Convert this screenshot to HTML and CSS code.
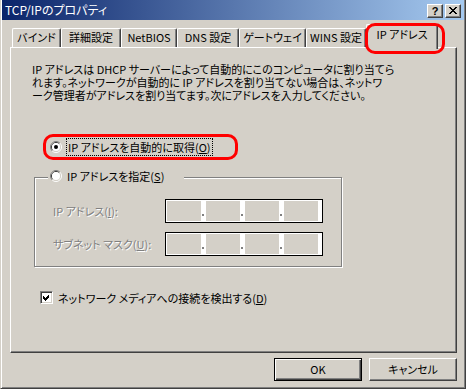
FILE: index.html
```html
<!DOCTYPE html>
<html lang="ja">

<head>
    <meta charset="UTF-8">
    <title>TCP/IPのプロパティ</title>
    <link rel="stylesheet" href="styles.css">
</head>

<body>
    <div class="window">
        <!-- タイトルバー -->
        <div class="title_bar">
            <span class="title">TCP/IPのプロパティ</span>
            <div class="cap_btns">
                <div class="cap_btn help">?</div>
                <div class="cap_btn">
                    <svg width="8" height="7" viewBox="0 0 8 7" shape-rendering="crispEdges">
                        <path d="M0 0h2v1h1v1h2v-1h1v-1h2v1h-1v1h-1v1h-1v1h1v1h1v1h1v1h-2v-1h-1v-1h-2v1h-1v1h-2v-1h1v-1h1v-1h1v-1h-1v-1h-1v-1h-1z" fill="#000"/>
                    </svg>
                </div>
            </div>
        </div>

        <!-- タブ -->
        <div class="tabs">
            <div class="tab">バインド</div>
            <div class="tab">詳細設定</div>
            <div class="tab">NetBIOS</div>
            <div class="tab">DNS 設定</div>
            <div class="tab">ゲートウェイ</div>
            <div class="tab">WINS 設定</div>
            <div class="tab active">IP アドレス</div>
        </div>

        <div class="panel">
            <p class="desc">IP アドレスは DHCP サーバーによって自動的にこのコンピュータに割り当てら<br>れます。ネットワークが自動的に IP アドレスを割り当てない場合は、ネットワ<br>ーク管理者がアドレスを割り当てます。次にアドレスを入力してください。</p>

            <div class="radio_row">
                <svg class="radio" width="12" height="12" viewBox="0 0 12 12">
                    <path d="M2.11 9.89A5.5 5.5 0 0 1 9.89 2.11" stroke="#808080" fill="none"/>
                    <path d="M9.89 2.11A5.5 5.5 0 0 1 2.11 9.89" stroke="#fff" fill="none"/>
                    <path d="M2.82 9.18A4.5 4.5 0 0 1 9.18 2.82" stroke="#404040" fill="none"/>
                    <path d="M9.18 2.82A4.5 4.5 0 0 1 2.82 9.18" stroke="#d4d0c8" fill="none"/>
                    <circle cx="6" cy="6" r="4" fill="#fff"/>
                    <circle cx="6" cy="6" r="2" fill="#000"/>
                </svg>
                <span class="focus">IP アドレスを自動的に取得(<u>O</u>)</span>
            </div>

            <div class="group">
                <div class="legend">
                    <svg class="radio" width="12" height="12" viewBox="0 0 12 12">
                        <path d="M2.11 9.89A5.5 5.5 0 0 1 9.89 2.11" stroke="#808080" fill="none"/>
                        <path d="M9.89 2.11A5.5 5.5 0 0 1 2.11 9.89" stroke="#fff" fill="none"/>
                        <path d="M2.82 9.18A4.5 4.5 0 0 1 9.18 2.82" stroke="#404040" fill="none"/>
                        <path d="M9.18 2.82A4.5 4.5 0 0 1 2.82 9.18" stroke="#d4d0c8" fill="none"/>
                        <circle cx="6" cy="6" r="4" fill="#fff"/>
                    </svg>
                    <span>IP アドレスを指定(<u>S</u>)</span>
                </div>

                <div class="ip_row">
                    <span class="label">IP アドレス(<u>I</u>):</span>
                    <div class="ip_box">
                        <div class="seg"></div><div class="dot"></div>
                        <div class="seg"></div><div class="dot"></div>
                        <div class="seg"></div><div class="dot"></div>
                        <div class="seg"></div>
                    </div>
                </div>
                <div class="ip_row second">
                    <span class="label">サブネット マスク(<u>U</u>):</span>
                    <div class="ip_box">
                        <div class="seg"></div><div class="dot"></div>
                        <div class="seg"></div><div class="dot"></div>
                        <div class="seg"></div><div class="dot"></div>
                        <div class="seg"></div>
                    </div>
                </div>
            </div>

            <div class="check_row">
                <div class="checkbox">
                    <svg width="11" height="11" viewBox="0 0 11 11" shape-rendering="crispEdges">
                        <path d="M2 4L4 6L8 2L8 5L4 9L2 7Z" fill="#000"/>
                    </svg>
                </div>
                <span>ネットワーク メディアへの接続を検出する(<u>D</u>)</span>
            </div>
        </div>

        <!-- ボタン -->
        <div class="buttons">
            <div class="btn default">OK</div>
            <div class="btn">キャンセル</div>
        </div>

        <!-- 赤い囲み -->
        <div class="mark mark_tab"></div>
        <div class="mark mark_radio"></div>
    </div>
</body>

</html>
```

FILE: styles.css
```css
* {
    margin: 0;
    padding: 0;
    box-sizing: border-box;
}

body {
    width: 466px;
    height: 389px;
    background-color: #d4d0c8;
    font-family: "Noto Sans CJK JP", sans-serif;
    font-size: 11px;
    font-feature-settings: "palt";
    color: #000;
    overflow: hidden;
}

u {
    text-decoration-thickness: 1px;
    text-underline-offset: 1px;
}

.window {
    position: relative;
    width: 466px;
    height: 389px;
    border-left: 1px solid #d4d0c8;
    border-right: 1px solid #404040;
    border-bottom: 1px solid #404040;
    padding: 0 1px 1px 1px;
    box-shadow: inset 1px 0 #fff, inset -1px -1px #808080;
}

/* タイトルバー */
.title_bar {
    display: flex;
    align-items: center;
    justify-content: space-between;
    height: 20px;
    padding: 0 3px 0 3px;
    background: linear-gradient(to right, #0a246a, #a6caf0);
}

.title {
    color: #fff;
    font-size: 12px;
    line-height: 20px;
}

.cap_btns {
    display: flex;
    gap: 2px;
    margin-top: 1px;
}

.cap_btn {
    display: flex;
    align-items: center;
    justify-content: center;
    width: 16px;
    height: 14px;
    background-color: #d4d0c8;
    border: 1px solid;
    border-color: #fff #404040 #404040 #fff;
    box-shadow: inset -1px -1px #808080;
}

.help {
    font-family: "Liberation Sans", sans-serif;
    font-weight: bold;
    font-size: 11px;
    line-height: 12px;
}

/* タブ */
.tabs {
    position: relative;
    z-index: 1;
    display: flex;
    align-items: flex-end;
    height: 23px;
    margin-top: 4px;
    padding-left: 10px;
}

.tab {
    height: 19px;
    line-height: 17px;
    text-align: center;
    white-space: nowrap;
    background-color: #d4d0c8;
    border-top: 1px solid #fff;
    border-left: 1px solid #fff;
    border-right: 1px solid #404040;
    border-radius: 2px 2px 0 0;
    box-shadow: inset -1px 0 #808080;
}

.tab:nth-child(1) { width: 49px; }
.tab:nth-child(2) { width: 60px; }
.tab:nth-child(3) { width: 56px; }
.tab:nth-child(4) { width: 62px; }
.tab:nth-child(5) { width: 67px; }
.tab:nth-child(6) { width: 60px; }

.tab.active {
    width: 72px;
    height: 25px;
    margin-bottom: -2px;
    line-height: 19px;
}

/* パネル */
.panel {
    width: 447px;
    height: 306px;
    margin-left: 8px;
    border: 1px solid;
    border-color: #fff #404040 #404040 #fff;
    box-shadow: inset -1px -1px #808080;
}

.desc {
    margin: 15px 0 0 21px;
    line-height: 13px;
    white-space: nowrap;
}

.radio_row {
    display: flex;
    align-items: center;
    height: 18px;
    margin: 36px 0 0 39px;
}

.radio {
    flex: none;
}

.focus {
    height: 18px;
    margin-left: 4px;
    padding: 0 1px;
    line-height: 16px;
    border: 1px dotted #000;
}

.group {
    width: 308px;
    margin: 21px 0 0 23px;
    padding-bottom: 10px;
    border: 1px solid #808080;
    box-shadow: inset 1px 1px #fff, 1px 1px #fff;
}

.legend {
    display: flex;
    align-items: center;
    gap: 5px;
    width: 136px;
    height: 14px;
    margin: -9px 0 0 13px;
    padding-left: 2px;
    background-color: #d4d0c8;
}

.ip_row {
    display: flex;
    align-items: center;
    margin-top: 16px;
    padding-left: 18px;
}

.ip_row.second {
    margin-top: 9px;
}

.label {
    width: 112px;
    color: #808080;
    text-shadow: 1px 1px #fff;
    white-space: nowrap;
}

.ip_box {
    display: flex;
    width: 158px;
    height: 24px;
    padding: 1px 4px 1px 1px;
    background-color: #fff;
    border: 1px solid #000;
}

.seg {
    width: 34px;
    background-color: #d4d0c8;
}

.dot {
    display: flex;
    align-items: flex-end;
    width: 5px;
    padding: 0 0 5px 1px;
}

.dot::before {
    content: "";
    width: 2px;
    height: 2px;
    background-color: #808080;
}

.check_row {
    display: flex;
    align-items: center;
    gap: 5px;
    height: 13px;
    margin: 24px 0 0 29px;
}

.checkbox {
    width: 13px;
    height: 13px;
    background-color: #fff;
    border: 1px solid;
    border-color: #808080 #fff #fff #808080;
    box-shadow: inset 1px 1px #404040, inset -1px -1px #d4d0c8;
}

.checkbox svg {
    display: block;
}

/* ボタン */
.buttons {
    display: flex;
    justify-content: flex-end;
    gap: 7px;
    margin-top: 5px;
    padding-right: 7px;
}

.btn {
    width: 88px;
    height: 23px;
    line-height: 21px;
    text-align: center;
    border: 1px solid;
    border-color: #fff #404040 #404040 #fff;
    box-shadow: inset -1px -1px #808080;
}

.btn.default {
    border: 1px solid #000;
    box-shadow: inset 1px 1px #fff, inset -1px -1px #404040, inset -2px -2px #808080;
}

/* 赤い囲み */
.mark {
    position: absolute;
    z-index: 2;
    border: 3px solid #f00;
    border-radius: 10px;
}

.mark_tab {
    left: 364px;
    top: 23px;
    width: 80px;
    height: 31px;
}

.mark_radio {
    left: 42px;
    top: 134px;
    width: 195px;
    height: 26px;
}
```
